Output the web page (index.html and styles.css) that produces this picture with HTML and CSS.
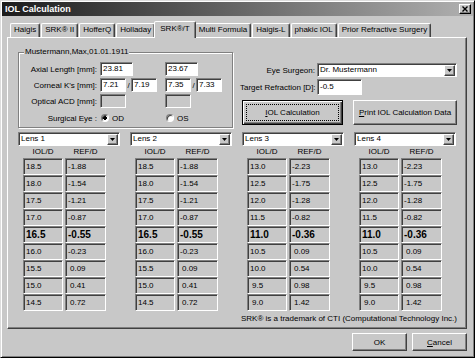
FILE: index.html
```html
<!DOCTYPE html>
<html lang="en">
<head>
    <meta charset="UTF-8">
    <title>IOL Calculation</title>
    <link rel="stylesheet" href="styles.css">
</head>
<body>
    <div class="dialog">
        <div class="titlebar">
            <span class="title">IOL Calculation</span>
            <span class="close">
                <svg width="6" height="6" viewBox="0 0 6 6"><path d="M0.5 0.5 L5.5 5.5 M5.5 0.5 L0.5 5.5" stroke="#000" stroke-width="1.4"/></svg>
            </span>
        </div>

        <div class="tabs">
            <span class="tab">Haigis</span>
            <span class="tab">SRK® II</span>
            <span class="tab">HofferQ</span>
            <span class="tab">Holladay</span>
            <span class="tab active">SRK®/T</span>
            <span class="tab">Multi Formula</span>
            <span class="tab">Haigis-L</span>
            <span class="tab">phakic IOL</span>
            <span class="tab">Prior Refractive Surgery</span>
        </div>

        <div class="panel">
            <div class="top">
                <fieldset class="patient">
                    <legend>Mustermann,Max,01.01.1911</legend>
                    <div class="frow">
                        <span class="lbl">Axial Length [mm]:</span>
                        <div class="eye"><span class="edit w-al">23.81</span></div>
                        <div class="eye"><span class="edit w-al">23.67</span></div>
                    </div>
                    <div class="frow">
                        <span class="lbl">Corneal K's [mm]:</span>
                        <div class="eye"><span class="edit w-k">7.21</span><span class="slash">/</span><span class="edit w-k">7.19</span></div>
                        <div class="eye"><span class="edit w-k">7.35</span><span class="slash">/</span><span class="edit w-k">7.33</span></div>
                    </div>
                    <div class="frow">
                        <span class="lbl">Optical ACD [mm]:</span>
                        <div class="eye"><span class="edit w-k off"></span></div>
                        <div class="eye"><span class="edit w-k off"></span></div>
                    </div>
                    <div class="frow">
                        <span class="lbl">Surgical Eye :</span>
                        <div class="eye"><span class="radio on"></span><span>OD</span></div>
                        <div class="eye"><span class="radio"></span><span>OS</span></div>
                    </div>
                </fieldset>

                <div class="setup">
                    <div class="srow">
                        <span class="slbl">Eye Surgeon:</span>
                        <div class="combo w-surgeon">
                            <span class="combo-text">Dr. Mustermann</span>
                            <span class="drop"><svg width="5" height="3" viewBox="0 0 5 3"><path d="M0 0 H5 L2.5 3 Z" fill="#000"/></svg></span>
                        </div>
                    </div>
                    <div class="srow">
                        <span class="slbl">Target Refraction [D]:</span>
                        <span class="edit w-target">-0.5</span>
                    </div>
                    <div class="srow buttons">
                        <span class="btn default"><span class="focus"><u>I</u>OL Calculation</span></span>
                        <span class="btn print"><u>P</u>rint IOL Calculation Data</span>
                    </div>
                </div>
            </div>

            <div class="lenses">
                <div class="lens">
                    <div class="combo">
                        <span class="combo-text">Lens 1</span>
                        <span class="drop"><svg width="5" height="3" viewBox="0 0 5 3"><path d="M0 0 H5 L2.5 3 Z" fill="#000"/></svg></span>
                    </div>
                    <div class="grid">
                        <span class="head">IOL/D</span><span class="head">REF/D</span>
                        <span class="cell">18.5</span><span class="cell">-1.88</span>
                        <span class="cell">18.0</span><span class="cell">-1.54</span>
                        <span class="cell">17.5</span><span class="cell">-1.21</span>
                        <span class="cell">17.0</span><span class="cell">-0.87</span>
                        <span class="cell best">16.5</span><span class="cell best">-0.55</span>
                        <span class="cell">16.0</span><span class="cell">-0.23</span>
                        <span class="cell">15.5</span><span class="cell plus">0.09</span>
                        <span class="cell">15.0</span><span class="cell plus">0.41</span>
                        <span class="cell">14.5</span><span class="cell plus">0.72</span>
                    </div>
                </div>
                <div class="lens">
                    <div class="combo">
                        <span class="combo-text">Lens 2</span>
                        <span class="drop"><svg width="5" height="3" viewBox="0 0 5 3"><path d="M0 0 H5 L2.5 3 Z" fill="#000"/></svg></span>
                    </div>
                    <div class="grid">
                        <span class="head">IOL/D</span><span class="head">REF/D</span>
                        <span class="cell">18.5</span><span class="cell">-1.88</span>
                        <span class="cell">18.0</span><span class="cell">-1.54</span>
                        <span class="cell">17.5</span><span class="cell">-1.21</span>
                        <span class="cell">17.0</span><span class="cell">-0.87</span>
                        <span class="cell best">16.5</span><span class="cell best">-0.55</span>
                        <span class="cell">16.0</span><span class="cell">-0.23</span>
                        <span class="cell">15.5</span><span class="cell plus">0.09</span>
                        <span class="cell">15.0</span><span class="cell plus">0.41</span>
                        <span class="cell">14.5</span><span class="cell plus">0.72</span>
                    </div>
                </div>
                <div class="lens">
                    <div class="combo">
                        <span class="combo-text">Lens 3</span>
                        <span class="drop"><svg width="5" height="3" viewBox="0 0 5 3"><path d="M0 0 H5 L2.5 3 Z" fill="#000"/></svg></span>
                    </div>
                    <div class="grid">
                        <span class="head">IOL/D</span><span class="head">REF/D</span>
                        <span class="cell">13.0</span><span class="cell">-2.23</span>
                        <span class="cell">12.5</span><span class="cell">-1.75</span>
                        <span class="cell">12.0</span><span class="cell">-1.28</span>
                        <span class="cell">11.5</span><span class="cell">-0.82</span>
                        <span class="cell best">11.0</span><span class="cell best">-0.36</span>
                        <span class="cell">10.5</span><span class="cell plus">0.09</span>
                        <span class="cell">10.0</span><span class="cell plus">0.54</span>
                        <span class="cell plus">9.5</span><span class="cell plus">0.98</span>
                        <span class="cell plus">9.0</span><span class="cell plus">1.42</span>
                    </div>
                </div>
                <div class="lens">
                    <div class="combo">
                        <span class="combo-text">Lens 4</span>
                        <span class="drop"><svg width="5" height="3" viewBox="0 0 5 3"><path d="M0 0 H5 L2.5 3 Z" fill="#000"/></svg></span>
                    </div>
                    <div class="grid">
                        <span class="head">IOL/D</span><span class="head">REF/D</span>
                        <span class="cell">13.0</span><span class="cell">-2.23</span>
                        <span class="cell">12.5</span><span class="cell">-1.75</span>
                        <span class="cell">12.0</span><span class="cell">-1.28</span>
                        <span class="cell">11.5</span><span class="cell">-0.82</span>
                        <span class="cell best">11.0</span><span class="cell best">-0.36</span>
                        <span class="cell">10.5</span><span class="cell plus">0.09</span>
                        <span class="cell">10.0</span><span class="cell plus">0.54</span>
                        <span class="cell plus">9.5</span><span class="cell plus">0.98</span>
                        <span class="cell plus">9.0</span><span class="cell plus">1.42</span>
                    </div>
                </div>
            </div>

            <p class="note">SRK® is a trademark of CTI (Computational Technology Inc.)</p>
        </div>

        <div class="actions">
            <span class="btn action">OK</span>
            <span class="btn action"><u>C</u>ancel</span>
        </div>
    </div>
</body>
</html>
```

FILE: styles.css
```css
* {
    box-sizing: border-box;
}
html, body {
    margin: 0;
    padding: 0;
    background: #c8c8c8;
}
body {
    font-family: "Liberation Sans", Arial, sans-serif;
    font-size: 8px;
    color: #000;
}
.dialog {
    width: 475px;
    height: 358px;
    border: 1px solid;
    border-color: #dcdcdc #000 #000 #dcdcdc;
    box-shadow: inset 1px 1px 0 #fff, inset -1px -1px 0 #808080;
    padding: 1px;
}

/* title bar */
.titlebar {
    height: 14px;
    display: flex;
    align-items: center;
    justify-content: space-between;
    padding: 0 2px 0 3px;
    background: linear-gradient(to right, #1c1c1c, #b0b0b0);
}
.title {
    color: #fff;
    font-weight: bold;
    font-size: 9px;
}
.close {
    width: 12px;
    height: 10px;
    display: flex;
    align-items: center;
    justify-content: center;
    background: #c8c8c8;
    border: 1px solid;
    border-color: #fff #000 #000 #fff;
    box-shadow: inset -1px -1px 0 #808080;
}

/* tabs */
.tabs {
    display: flex;
    align-items: flex-end;
    height: 21px;
    padding-left: 8px;
}
.tab {
    height: 14px;
    line-height: 12px;
    padding: 0 3px;
    margin-right: 1px;
    border: 1px solid;
    border-bottom: none;
    border-color: #fff #404040 transparent #fff;
    box-shadow: inset -1px 0 0 #808080;
    border-radius: 2px 2px 0 0;
    white-space: nowrap;
}
.tab.active {
    position: relative;
    z-index: 1;
    height: 17px;
    line-height: 14px;
    margin: 0 -1px -1px -2px;
    padding: 0 5px;
    background: #c8c8c8;
}

/* page */
.panel {
    margin-left: 5px;
    width: 460px;
    height: 292px;
    border: 1px solid;
    border-color: #fff #404040 #404040 #fff;
    box-shadow: inset -1px -1px 0 #808080;
    padding: 9px 0 0 10px;
}
.top {
    display: flex;
    height: 81px;
}

.patient {
    margin: 0;
    padding: 5px 0 0 0;
    width: 215px;
    height: 81px;
    border: 1px solid #808080;
    box-shadow: inset 1px 1px 0 #fff, 1px 1px 0 #fff;
}
.patient legend {
    margin-left: 5px;
    padding: 0 1px;
    line-height: 10px;
    background: #c8c8c8;
}
.frow {
    display: flex;
    align-items: center;
    height: 14px;
    margin-bottom: 2px;
}
.frow:last-child {
    height: 16px;
}
.lbl {
    width: 78px;
    text-align: right;
    white-space: nowrap;
}
.eye {
    width: 57px;
    margin-left: 3px;
    display: flex;
    align-items: center;
}
.eye + .eye {
    margin-left: 8px;
}
.slash {
    width: 5px;
    text-align: center;
}

.edit {
    display: block;
    height: 14px;
    line-height: 12px;
    padding-left: 2px;
    background: #fff;
    border: 1px solid;
    border-color: #808080 #fff #fff #808080;
    box-shadow: inset 1px 1px 0 #404040;
    white-space: nowrap;
}
.edit.off {
    background: #c8c8c8;
}
.w-al { width: 33px; }
.w-k { width: 26px; }
.w-target { width: 45px; height: 16px; line-height: 14px; }

.radio {
    width: 8px;
    height: 8px;
    margin: 0 3px 0 1px;
    border-radius: 50%;
    background: #fff;
    border: 1px solid;
    border-color: #808080 #fff #fff #808080;
    box-shadow: inset 1px 1px 0 #404040;
}
.radio.on {
    background: radial-gradient(circle, #000 0 1.6px, #fff 2px);
}

.setup {
    margin-left: 7px;
    width: 217px;
    padding-top: 16px;
}
.srow {
    display: flex;
    align-items: center;
    margin-bottom: 2px;
}
.slbl {
    width: 75px;
    margin-right: 2px;
    text-align: right;
    white-space: nowrap;
}

.combo {
    height: 14px;
    display: flex;
    align-items: center;
    justify-content: space-between;
    background: #fff;
    border: 1px solid;
    border-color: #808080 #fff #fff #808080;
    box-shadow: inset 1px 1px 0 #404040;
    padding: 1px 1px 1px 2px;
}
.w-surgeon {
    width: 140px;
}
.combo-text {
    line-height: 10px;
}
.drop {
    width: 11px;
    height: 11px;
    display: flex;
    align-items: center;
    justify-content: center;
    background: #c8c8c8;
    border: 1px solid;
    border-color: #fff #404040 #404040 #fff;
    box-shadow: inset -1px -1px 0 #808080;
}

.buttons {
    margin-top: 5px;
    padding-left: 2px;
    justify-content: space-between;
}
.btn {
    display: flex;
    align-items: center;
    justify-content: center;
    background: #c8c8c8;
    border: 1px solid;
    border-color: #fff #404040 #404040 #fff;
    box-shadow: inset -1px -1px 0 #808080;
    white-space: nowrap;
}
.btn.default {
    width: 101px;
    height: 25px;
    padding: 3px;
    border-color: #000;
    box-shadow: inset 1px 1px 0 #fff, inset -1px -1px 0 #404040, inset -2px -2px 0 #808080;
}
.focus {
    flex: 1;
    align-self: stretch;
    display: flex;
    align-items: center;
    justify-content: center;
    border: 1px dotted #000;
}
.btn.print {
    width: 104px;
    height: 25px;
}

/* lens tables */
.lenses {
    display: grid;
    grid-template-columns: repeat(4, 102px);
    column-gap: 10px;
    margin-top: 4px;
}
.grid {
    display: grid;
    grid-template-columns: 40px 41px;
    column-gap: 2px;
    margin-left: 5px;
}
.head {
    height: 12px;
    line-height: 12px;
    text-align: center;
}
.cell {
    height: 17px;
    line-height: 15px;
    padding-left: 2px;
    border: 1px solid;
    border-color: #808080 #fff #fff #808080;
    box-shadow: inset 1px 1px 0 #404040;
}
.cell.plus {
    padding-left: 4px;
}
.cell.best {
    font-weight: bold;
    font-size: 10px;
}

.note {
    margin: 3px 9px 0 0;
    text-align: right;
    line-height: 10px;
}

.actions {
    display: flex;
    justify-content: flex-end;
    gap: 5px;
    margin-top: 4px;
    padding-right: 6px;
}
.btn.action {
    width: 55px;
    height: 18px;
}
```
